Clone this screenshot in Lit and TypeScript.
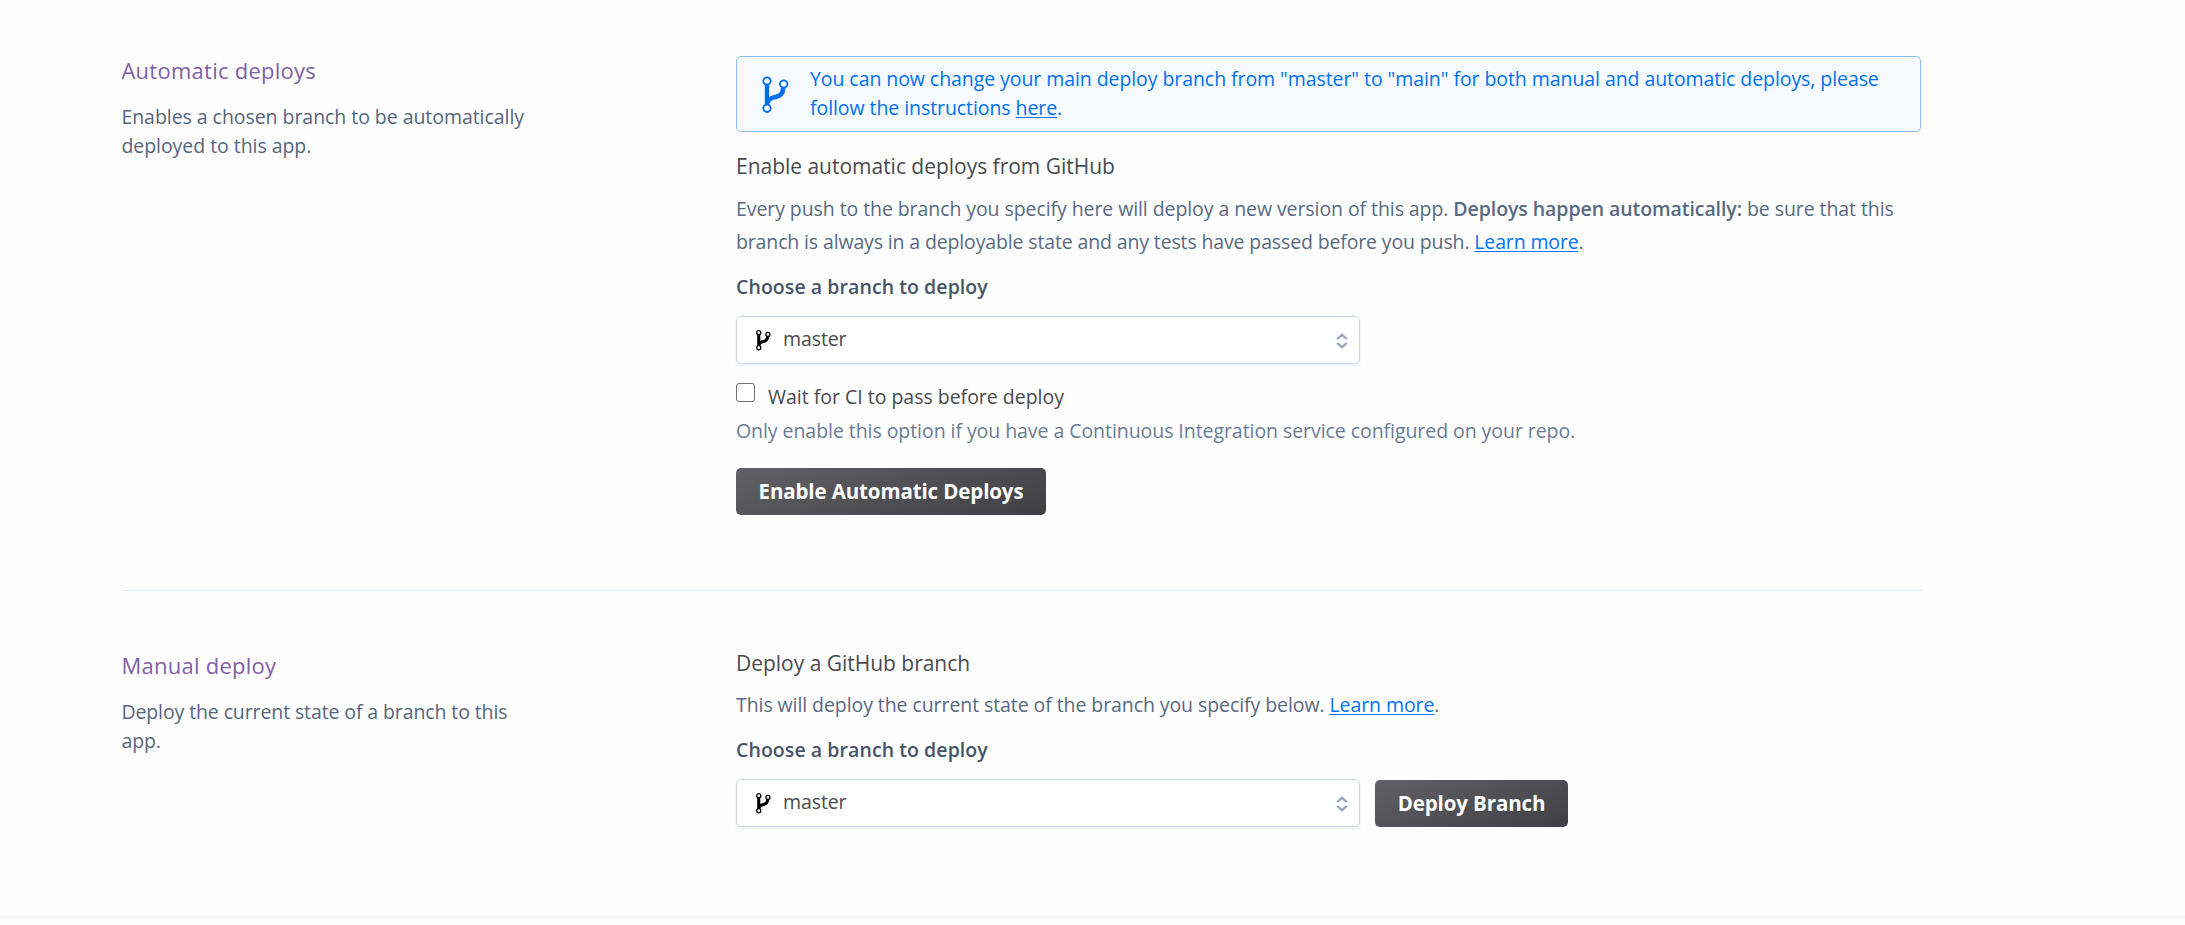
import { LitElement, html, css } from "lit";
import { customElement } from "lit/decorators.js";

const branchIcon = html`<svg class="branch" viewBox="0 0 28 38" fill="none" stroke="currentColor">
  <path d="M5 8.5V29" stroke-width="4.4"/>
  <path d="M21.2 12C20.8 18.3 18 20.2 13.5 20.9C9.3 21.6 6.6 22.8 5 27" stroke-width="4.6"/>
  <circle cx="5" cy="5" r="3.7" stroke-width="1.8"/>
  <circle cx="21.7" cy="8" r="3.7" stroke-width="1.8"/>
  <circle cx="5" cy="32.3" r="3.7" stroke-width="1.8"/>
</svg>`;

@customElement("branch-select")
export class BranchSelect extends LitElement {
  static styles = css`
    :host { display: flex; align-items: flex-start; box-sizing: border-box; width: 624px; height: 48px;
      padding: 0 11px 0 19px; border: 1px solid #cfd7e6; border-radius: 5px; background: #fff;
      box-shadow: 0 2px 3px rgba(60, 70, 100, 0.08); }
    .branch { width: 15.4px; height: 20.9px; margin: 13px 12px 0 -0.4px; color: #000; flex: none; overflow: visible; stroke-width: 2.4; }
    .branch circle { stroke-width: 2.3; }
    .branch path { stroke-width: 5.6; }
    .name { flex: 1; margin-top: 7px; font-size: 19.5px; line-height: 29px; color: #4a4a4f; letter-spacing: -0.1px; }
    .arrows { width: 12px; height: 16px; margin-top: 15.5px; }
  `;
  render() {
    return html`${branchIcon}<span class="name">master</span>
      <svg class="arrows" viewBox="0 0 12 16" fill="none" stroke="#97a3b9" stroke-width="2.3">
        <path d="M1.2 6L6 1.8L10.8 6M1.2 10L6 14.2L10.8 10"/>
      </svg>`;
  }
}

@customElement("app-root")
export class AppRoot extends LitElement {
  static styles = css`
    :host { display: block; box-sizing: border-box; min-height: 925px; background: #fefefe;
      font-family: "Open Sans", "Noto Sans", sans-serif; font-size: 19.5px; line-height: 29px; color: #596981; }
    h2, h3, p { margin: 0; font-weight: 400; }
    .panel { display: grid; grid-template-columns: 614px 1185px; width: 1800px; margin-left: 122px; box-sizing: border-box; }
    .auto { padding: 55px 0 75px; border-bottom: 1px solid #e3eaf5; }
    .manual { padding: 57px 0 90px; }
    .manual .side { padding-top: 2px; }
    .auto .main { padding-top: 1px; }
    .side { margin-left: -0.6px; }
    .side h2 { font-size: 22px; line-height: 30px; letter-spacing: 0.26px; color: #8160a6; margin-bottom: 17px; }
    .side p { width: 410px; letter-spacing: -0.05px; color: #56657c; }
    .manual .side p { letter-spacing: -0.11px; }
    .banner { display: flex; box-sizing: border-box; height: 76px; padding: 7px 24px 0 25px; border: 1px solid #8dbdf4;
      border-radius: 5px; background: #f6f9fe; color: #0072f0; letter-spacing: -0.072px; }
    .banner .branch { width: 28px; height: 38px; flex: none; margin: 12px 20px 0 0; color: #006deb; }
    .banner p { width: 1082px; }
    h3 { font-size: 21px; line-height: 30px; letter-spacing: -0.02px; color: #4a4a4f; }
    .auto h3 { margin-top: 19px; margin-bottom: 11px; }
    .manual h3 { margin-bottom: 10px; }
    .text { line-height: 33px; letter-spacing: -0.08px; }
    .tight { letter-spacing: -0.14px; }
    b { font-weight: 600; letter-spacing: -0.07px; }
    a { color: #0074f8; text-decoration: underline; text-decoration-thickness: 1px; text-underline-offset: 2px; text-decoration-skip-ink: none; }
    .banner a { color: inherit; }
    .label { margin: 14px 0 15px; font-weight: 600; letter-spacing: 0.07px; color: #475468; }
    .check { display: flex; margin-top: 18px; color: #4a4a4f; letter-spacing: -0.015px; }
    .box { box-sizing: border-box; width: 19px; height: 19px; margin: 1px 13px 0 0; border: 1px solid #6f6f74; border-radius: 3px; background: #fff; }
    .hint { margin: 5px 0 23px; color: #6a7b95; letter-spacing: -0.06px; }
    .row { display: flex; align-items: flex-end; gap: 15px; }
    .btn { display: block; box-sizing: border-box; height: 47px; border: 0; border-radius: 5px; padding: 0; width: 310px;
      font: 700 20.5px/29px "Open Sans", sans-serif; letter-spacing: -0.12px; color: #fff;
      background: linear-gradient(160deg, #606065, #3f3f44); }
    .deploy { width: 193px; }
    .end { height: 1px; background: #eeeef0; }
  `;
  render() {
    return html`
      <section class="panel auto">
        <div class="side">
          <h2>Automatic deploys</h2>
          <p>Enables a chosen branch to be automatically deployed to this app.</p>
        </div>
        <div class="main">
          <div class="banner">${branchIcon}<p>You can now change your main deploy branch from "master" to "main" for both manual and automatic deploys, please follow the instructions <a>here</a>.</p></div>
          <h3>Enable automatic deploys from GitHub</h3>
          <p class="text">Every push to the branch you specify here will deploy a new version of this app. <b>Deploys happen automatically:</b> be sure that this <span class="tight">branch is always in a deployable state and any tests have passed before you push. <a>Learn more</a>.</span></p>
          <p class="label">Choose a branch to deploy</p>
          <branch-select></branch-select>
          <div class="check"><span class="box"></span><span>Wait for CI to pass before deploy</span></div>
          <p class="hint">Only enable this option if you have a Continuous Integration service configured on your repo.</p>
          <button class="btn">Enable Automatic Deploys</button>
        </div>
      </section>
      <section class="panel manual">
        <div class="side">
          <h2>Manual deploy</h2>
          <p>Deploy the current state of a branch to this app.</p>
        </div>
        <div class="main">
          <h3>Deploy a GitHub branch</h3>
          <p class="text">This will deploy the current state of the branch you specify below. <a>Learn more</a>.</p>
          <p class="label">Choose a branch to deploy</p>
          <div class="row"><branch-select></branch-select><button class="btn deploy">Deploy Branch</button></div>
        </div>
      </section>
      <div class="end"></div>
    `;
  }
}
